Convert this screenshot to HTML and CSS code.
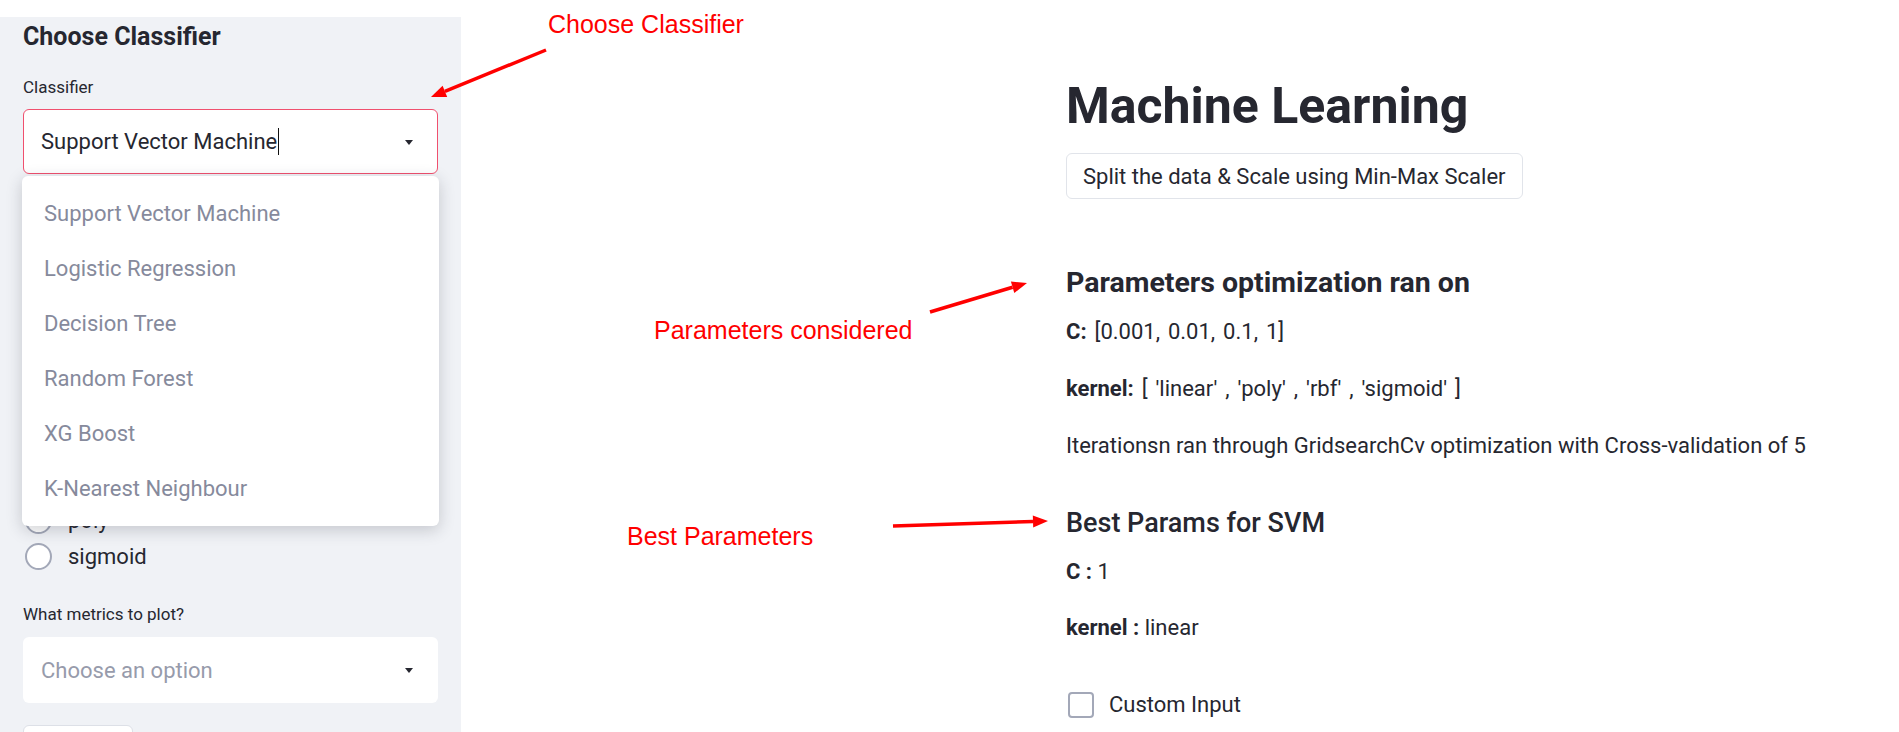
FILE: index.html
```html
<!DOCTYPE html>
<html lang="en">
<head>
<meta charset="utf-8">
<title>Machine Learning</title>
<link rel="stylesheet" href="styles.css">
</head>
<body>
<div class="page">
  <aside class="sidebar">
    <h2 class="sb-title">Choose Classifier</h2>
    <div class="field">
      <div class="lbl">Classifier</div>
      <div class="select-wrap">
        <div class="select focused">
          <span class="sel-val">Support Vector Machine</span><span class="caret"></span>
          <span class="arrow"></span>
        </div>
        <ul class="menu">
          <li>Support Vector Machine</li>
          <li>Logistic Regression</li>
          <li>Decision Tree</li>
          <li>Random Forest</li>
          <li>XG Boost</li>
          <li>K-Nearest Neighbour</li>
        </ul>
      </div>
    </div>
    <div class="field radios">
      <div class="radio"><span class="dot"></span>poly</div>
      <div class="radio"><span class="dot"></span>sigmoid</div>
    </div>
    <div class="field metrics">
      <div class="lbl">What metrics to plot?</div>
      <div class="select multi">
        <span class="placeholder">Choose an option</span>
        <span class="arrow"></span>
      </div>
    </div>
    <div class="sb-btn"></div>
  </aside>

  <main class="main">
    <h1 class="title">Machine Learning</h1>
    <button class="btn">Split the data &amp; Scale using Min-Max Scaler</button>

    <h3 class="h3">Parameters optimization ran on</h3>
    <p class="p p-first p-list"><b>C:</b> [0.001, 0.01, 0.1, 1]</p>
    <p class="p p-list"><b>kernel:</b> [ 'linear' , 'poly' , 'rbf' , 'sigmoid' ]</p>
    <p class="p">Iterationsn ran through GridsearchCv optimization with Cross-validation of 5</p>

    <h4 class="h4">Best Params for SVM</h4>
    <p class="p p-first"><b>C :</b> 1</p>
    <p class="p p-k"><b>kernel :</b> linear</p>

    <label class="check"><span class="box"></span>Custom Input</label>
  </main>

  <svg class="arrows" width="1899" height="732" viewBox="0 0 1899 732">
    <line x1="546" y1="50" x2="444.9" y2="91.3"/>
    <polygon points="431,97 442.6,85.7 447.2,96.9"/>
    <line x1="930" y1="312" x2="1012.6" y2="287.3"/>
    <polygon points="1027,283 1014.3,293 1010.9,281.6"/>
    <line x1="893" y1="526" x2="1033" y2="521.5"/>
    <polygon points="1048,521 1033.2,527.5 1032.8,515.5"/>
  </svg>
  <div class="note note-1">Choose Classifier</div>
  <div class="note note-2">Parameters considered</div>
  <div class="note note-3">Best Parameters</div>
</div>
</body>
</html>
```
FILE: styles.css
```css
* { box-sizing: border-box; }
html, body { margin: 0; padding: 0; background: #fff; }
body {
  font-family: Roboto, "Noto Sans", sans-serif;
  color: #262730;
  width: 1899px;
  height: 732px;
  overflow: hidden;
}
.page {
  position: relative;
  display: flex;
  align-items: flex-start;
  width: 1899px;
  height: 732px;
  overflow: hidden;
}

/* ---------- sidebar ---------- */
.sidebar {
  width: 461px;
  flex: none;
  margin-top: 17px;
  height: 715px;
  overflow: hidden;
  background: #f0f2f6;
  padding: 5px 23px 0 23px;
  display: flex;
  flex-direction: column;
}
.sb-title {
  margin: 0;
  font-size: 25px;
  line-height: 30px;
  font-weight: 700;
  color: #262730;
}
.lbl {
  font-size: 17px;
  line-height: 20px;
  color: #262730;
}
.field { display: flex; flex-direction: column; }
.sidebar > .field:first-of-type { margin-top: 25px; }
.select-wrap { position: relative; margin-top: 12px; z-index: 5; }
.select {
  position: relative;
  height: 65px;
  background: #fff;
  border-radius: 6px;
  border: 1.5px solid transparent;
  display: flex;
  align-items: center;
  padding-left: 17px;
  font-size: 22px;
}
.select.focused { border-color: #f0506e; }
.sel-val { color: #262730; }
.caret {
  display: inline-block;
  width: 0;
  height: 27px;
  border-left: 1.5px solid #111;
  margin-left: 1px;
}
.arrow {
  position: absolute;
  right: 24px;
  top: 50%;
  margin-top: -2px;
  width: 0;
  height: 0;
  border-left: 4.5px solid transparent;
  border-right: 4.5px solid transparent;
  border-top: 5px solid #262730;
}
.menu {
  position: absolute;
  left: -1px;
  top: calc(100% + 2px);
  width: 417px;
  margin: 0;
  padding: 10px 0;
  list-style: none;
  background: #fff;
  border-radius: 6px;
  box-shadow: 0 4px 16px rgba(40, 44, 60, 0.22);
}
.menu li {
  height: 55px;
  display: flex;
  align-items: center;
  padding-left: 22px;
  font-size: 22px;
  color: #868a9c;
}

.radios { margin-top: 328px; }
.radio {
  height: 36px;
  display: flex;
  align-items: center;
  font-size: 22px;
  color: #262730;
}
.dot {
  width: 27px;
  height: 27px;
  border-radius: 50%;
  border: 2px solid #a3a8b8;
  background: #fff;
  margin: 0 16px 0 2px;
}

.metrics { margin-top: 30px; }
.multi {
  margin-top: 13px;
  height: 66px;
}
.placeholder { color: #979bab; }
.sb-btn {
  margin-top: 22px;
  width: 110px;
  height: 44px;
  flex: none;
  background: #fff;
  border: 1px solid #dde0e7;
  border-radius: 6px;
}

/* ---------- main ---------- */
.main {
  flex: 1;
  padding-left: 605px;
  display: flex;
  flex-direction: column;
  align-items: flex-start;
}
.title {
  margin: 76px 0 0;
  font-size: 50px;
  line-height: 60px;
  font-weight: 700;
  color: #262730;
}
.btn {
  margin-top: 17px;
  height: 46px;
  padding: 0 16px;
  background: #fff;
  border: 1px solid #e1e4ea;
  border-radius: 6px;
  font-family: Roboto, sans-serif;
  font-size: 22px;
  color: #262730;
}
.h3 {
  margin: 66px 0 0;
  font-size: 28.5px;
  line-height: 36px;
  font-weight: 700;
}
.p {
  margin: 25px 0 0;
  font-size: 22px;
  line-height: 32px;
}
.p b { font-weight: 700; }
.p-first { margin-top: 15px; }
.p-list { word-spacing: 2.5px; }
.p-k { margin-top: 24px; }
.h4 {
  margin: 43px 0 0;
  font-size: 27px;
  line-height: 36px;
  font-weight: 500;
}
.check {
  margin-top: 47px;
  display: flex;
  align-items: center;
  height: 27px;
  font-size: 22px;
  padding-left: 2px;
}
.box {
  width: 26px;
  height: 26px;
  border: 2px solid #a3a8b8;
  border-radius: 4px;
  background: #fff;
  margin-right: 15px;
}

/* ---------- annotations ---------- */
.arrows {
  position: absolute;
  left: 0;
  top: 0;
  pointer-events: none;
  z-index: 10;
}
.arrows line { stroke: #ff0000; stroke-width: 3.5; }
.arrows polygon { fill: #ff0000; }
.note {
  position: absolute;
  z-index: 10;
  font-family: "Liberation Sans", Arial, sans-serif;
  font-size: 25px;
  line-height: 25px;
  color: #ff0000;
  white-space: nowrap;
}
.note-1 { left: 548px; top: 12px; }
.note-2 { left: 654px; top: 318px; }
.note-3 { left: 627px; top: 524px; }
```
